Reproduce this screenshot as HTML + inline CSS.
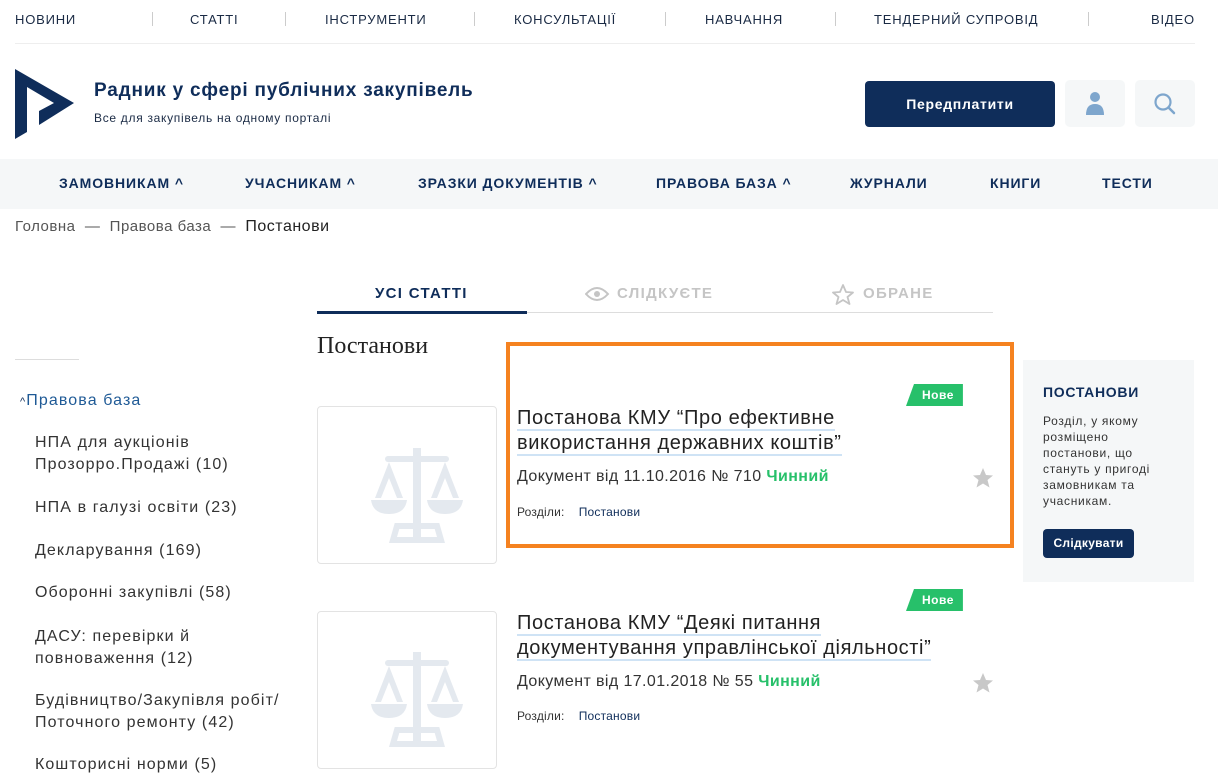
<!DOCTYPE html>
<html><head><meta charset="utf-8"><style>
*{margin:0;padding:0;box-sizing:border-box}
body{width:1218px;height:783px;overflow:hidden;background:#fff;font-family:"Liberation Sans",sans-serif;color:#222;position:relative;letter-spacing:0.7px}
.a{position:absolute;white-space:nowrap}
.top{font-size:13px;color:#1a2a44;top:12px;letter-spacing:0.8px}
.sep{position:absolute;top:12px;width:1px;height:14px;background:#ccc}
.nav{font-size:14px;font-weight:bold;color:#0f2d5a;top:175px;letter-spacing:0.9px}
.side{font-size:16px;color:#333;left:35px;line-height:22px;letter-spacing:1.1px}
.nove{position:absolute;background:#27c06a;color:#fff;font-size:12px;font-weight:bold;height:22px;line-height:22px;padding:0 9px 0 16px;clip-path:polygon(8px 0,100% 0,100% 100%,0 100%);letter-spacing:0.5px}
.title{font-size:20px;color:#222;line-height:25px;letter-spacing:0.6px}
.title span{border-bottom:2px solid #cfe3f5}
.doc{font-size:16px;color:#333;letter-spacing:0.4px}
.doc b{color:#27c06a}
.rz{font-size:12px;color:#333;letter-spacing:0.2px}
.thumb{position:absolute;left:317px;width:180px;height:158px;border:1px solid #e3e3e3;border-radius:4px}
</style></head><body>
<div class="a top" style="left:15px">НОВИНИ</div>
<div class="sep" style="left:152px"></div>
<div class="a top" style="left:190px">СТАТТІ</div>
<div class="sep" style="left:285px"></div>
<div class="a top" style="left:325px">ІНСТРУМЕНТИ</div>
<div class="sep" style="left:474px"></div>
<div class="a top" style="left:514px">КОНСУЛЬТАЦІЇ</div>
<div class="sep" style="left:665px"></div>
<div class="a top" style="left:705px">НАВЧАННЯ</div>
<div class="sep" style="left:835px"></div>
<div class="a top" style="left:874px">ТЕНДЕРНИЙ СУПРОВІД</div>
<div class="sep" style="left:1088px"></div>
<div class="a top" style="left:1151px">ВІДЕО</div>
<div class="a" style="left:15px;top:43px;width:1180px;height:1px;background:#eee"></div>

<svg class="a" style="left:0;top:0" width="90" height="150"><polygon points="15,69 74,103 39,125 39,111 54,103 27,87 27,132 15,139" fill="#0f2d5a"/></svg>
<div class="a" style="left:94px;top:80px;font-size:19px;font-weight:bold;color:#0f2d5a;letter-spacing:0.8px">Радник у сфері публічних закупівель</div>
<div class="a" style="left:94px;top:111px;font-size:12px;color:#1a2a44;letter-spacing:0.7px">Все для закупівель на одному порталі</div>
<div class="a" style="left:865px;top:81px;width:190px;height:46px;background:#0f2d5a;border-radius:4px;color:#fff;font-weight:bold;font-size:14px;text-align:center;line-height:46px">Передплатити</div>
<div class="a" style="left:1065px;top:80px;width:60px;height:47px;background:#f5f7f8;border-radius:5px"></div>
<svg class="a" style="left:1085px;top:91px" width="20" height="25"><circle cx="10" cy="6" r="5" fill="#7ea6cd"/><path d="M1 24 Q1 13 10 13 Q19 13 19 24Z" fill="#7ea6cd"/></svg>
<div class="a" style="left:1135px;top:80px;width:60px;height:47px;background:#f5f7f8;border-radius:5px"></div>
<svg class="a" style="left:1153px;top:92px" width="24" height="24"><circle cx="10" cy="10" r="7.5" fill="none" stroke="#7ea6cd" stroke-width="2.2"/><path d="M15.5 15.5L21 21" stroke="#7ea6cd" stroke-width="2.5" stroke-linecap="round"/></svg>

<div class="a" style="left:0;top:159px;width:1218px;height:50px;background:#f5f7f8"></div>
<div class="a nav" style="left:59px">ЗАМОВНИКАМ ^</div>
<div class="a nav" style="left:245px">УЧАСНИКАМ ^</div>
<div class="a nav" style="left:418px">ЗРАЗКИ ДОКУМЕНТІВ ^</div>
<div class="a nav" style="left:656px">ПРАВОВА БАЗА ^</div>
<div class="a nav" style="left:850px">ЖУРНАЛИ</div>
<div class="a nav" style="left:990px">КНИГИ</div>
<div class="a nav" style="left:1102px">ТЕСТИ</div>

<div class="a" style="left:15px;top:218px;font-size:15px;color:#555;letter-spacing:0.5px">Головна &nbsp;— &nbsp;Правова база &nbsp;— &nbsp;<span style="color:#222;font-size:16px">Постанови</span></div>

<div class="a" style="left:317px;top:312px;width:676px;height:1px;background:#ddd"></div>
<div class="a" style="left:317px;top:311px;width:210px;height:3px;background:#0f2d5a"></div>
<div class="a" style="left:375px;top:285px;font-size:15px;font-weight:bold;color:#0f2d5a;letter-spacing:1.3px">УСІ СТАТТІ</div>
<svg class="a" style="left:585px;top:285px" width="25" height="18"><path d="M1 9 Q12 -3 23 9 Q12 21 1 9Z" fill="none" stroke="#c5c5c5" stroke-width="2"/><circle cx="12" cy="9" r="3" fill="#c5c5c5"/></svg>
<div class="a" style="left:617px;top:285px;font-size:15px;font-weight:bold;color:#c5c5c5;letter-spacing:1.3px">СЛІДКУЄТЕ</div>
<svg class="a" style="left:831px;top:283px" width="24" height="22"><polygon points="12,2 15,9 22,9.5 16.5,14 18.5,21 12,17 5.5,21 7.5,14 2,9.5 9,9" fill="none" stroke="#c5c5c5" stroke-width="1.8" stroke-linejoin="round"/></svg>
<div class="a" style="left:863px;top:285px;font-size:15px;font-weight:bold;color:#c5c5c5;letter-spacing:1.3px">ОБРАНЕ</div>

<div class="a" style="left:317px;top:333px;font-family:'Liberation Serif',serif;font-size:24px;color:#222;letter-spacing:0">Постанови</div>

<div class="a" style="left:15px;top:359px;width:64px;height:1px;background:#ddd"></div>
<div class="a side" style="left:20px;top:390px;color:#1f5a96"><span style="font-size:11px;color:#0f2d5a">^</span>Правова база</div>
<div class="a side" style="top:432px">НПА для аукціонів<br>Прозорро.Продажі (10)</div>
<div class="a side" style="top:497px">НПА в галузі освіти (23)</div>
<div class="a side" style="top:540px">Декларування (169)</div>
<div class="a side" style="top:582px">Оборонні закупівлі (58)</div>
<div class="a side" style="top:626px">ДАСУ: перевірки й<br>повноваження (12)</div>
<div class="a side" style="top:690px">Будівництво/Закупівля робіт/<br>Поточного ремонту (42)</div>
<div class="a side" style="top:754px">Кошторисні норми (5)</div>

<svg width="0" height="0" style="position:absolute"><defs><g id="sc" fill="#e4e9ef"><rect x="46" y="0" width="8" height="90"/><rect x="18" y="8" width="64" height="6" rx="3"/><path d="M22 14 L8 50 H14 L22 30 L30 50 H36Z"/><path d="M4 52 H40 Q38 66 22 66 Q6 66 4 52Z"/><path d="M78 14 L64 50 H70 L78 30 L86 50 H92Z"/><path d="M60 52 H96 Q94 66 78 66 Q62 66 60 52Z"/><path d="M30 78 H70 L74 92 H26Z" fill="none" stroke="#e4e9ef" stroke-width="6"/></g></defs></svg>

<div class="thumb" style="top:406px"></div>
<svg class="a" style="left:367px;top:448px" width="100" height="100"><use href="#sc"/></svg>
<div class="a" style="left:506px;top:342px;width:508px;height:206px;border:4px solid #f58220"></div>
<div class="nove" style="left:906px;top:384px">Нове</div>
<div class="a title" style="left:517px;top:406px"><span>Постанова КМУ “Про ефективне</span><br><span>використання державних коштів”</span></div>
<div class="a doc" style="left:517px;top:468px">Документ від 11.10.2016 № 710 <b>Чинний</b></div>
<div class="a rz" style="left:517px;top:505px">Розділи: &nbsp;&nbsp;&nbsp;<span style="color:#0f2d5a">Постанови</span></div>
<svg class="a" style="left:972px;top:467px" width="22" height="22"><polygon points="11,1 14,8 21,8.5 15.5,13 17.5,20.5 11,16.5 4.5,20.5 6.5,13 1,8.5 8,8" fill="#c8c8c8"/></svg>

<div class="thumb" style="top:611px"></div>
<svg class="a" style="left:367px;top:652px" width="100" height="100"><use href="#sc"/></svg>
<div class="nove" style="left:906px;top:589px">Нове</div>
<div class="a title" style="left:517px;top:611px"><span>Постанова КМУ “Деякі питання</span><br><span>документування управлінської діяльності”</span></div>
<div class="a doc" style="left:517px;top:673px">Документ від 17.01.2018 № 55 <b>Чинний</b></div>
<div class="a rz" style="left:517px;top:709px">Розділи: &nbsp;&nbsp;&nbsp;<span style="color:#0f2d5a">Постанови</span></div>
<svg class="a" style="left:972px;top:672px" width="22" height="22"><polygon points="11,1 14,8 21,8.5 15.5,13 17.5,20.5 11,16.5 4.5,20.5 6.5,13 1,8.5 8,8" fill="#c8c8c8"/></svg>

<div class="a" style="left:1023px;top:360px;width:171px;height:222px;background:#f5f7f8"></div>
<div class="a" style="left:1043px;top:384px;font-size:14px;font-weight:bold;color:#0f2d5a">ПОСТАНОВИ</div>
<div class="a" style="left:1043px;top:413px;font-size:12px;color:#333;line-height:16px;white-space:normal;width:118px">Розділ, у якому розміщено постанови, що стануть у пригоді замовникам та учасникам.</div>
<div class="a" style="left:1043px;top:529px;width:91px;height:29px;background:#0f2d5a;border-radius:4px;color:#fff;font-size:12px;font-weight:bold;text-align:center;line-height:29px;letter-spacing:0.3px">Слідкувати</div>
</body></html>
